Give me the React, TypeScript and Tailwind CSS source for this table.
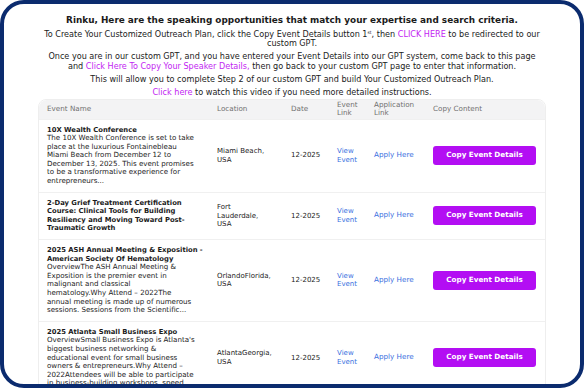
const events = [
  {
    title: ["10X Wealth Conference"],
    desc: [
      "The 10X Wealth Conference is set to take",
      "place at the luxurious Fontainebleau",
      "Miami Beach from December 12 to",
      "December 13, 2025. This event promises",
      "to be a transformative experience for",
      "entrepreneurs...",
    ],
    location: ["Miami Beach,", "USA"],
  },
  {
    title: [
      "2-Day Grief Treatment Certification",
      "Course: Clinical Tools for Building",
      "Resiliency and Moving Toward Post-",
      "Traumatic Growth",
    ],
    desc: [],
    location: ["Fort", "Lauderdale,", "USA"],
  },
  {
    title: ["2025 ASH Annual Meeting & Exposition -", "American Society Of Hematology"],
    desc: [
      "OverviewThe ASH Annual Meeting &",
      "Exposition is the premier event in",
      "malignant and classical",
      "hematology.Why Attend – 2022The",
      "annual meeting is made up of numerous",
      "sessions. Sessions from the Scientific...",
    ],
    location: ["OrlandoFlorida,", "USA"],
  },
  {
    title: ["2025 Atlanta Small Business Expo"],
    desc: [
      "OverviewSmall Business Expo is Atlanta's",
      "biggest business networking &",
      "educational event for small business",
      "owners & entrepreneurs.Why Attend –",
      "2022Attendees will be able to participate",
      "in business-building workshops, speed...",
    ],
    location: ["AtlantaGeorgia,", "USA"],
  },
]

const cols = "grid grid-cols-[170px_74px_46px_37px_59px_1fr]"

export default function App() {
  return (
    <div className="w-[586px] h-[390px] bg-white" style={{ fontFamily: "'DejaVu Sans', sans-serif" }}>
      <div className="w-[584px] h-[388px] border-4 border-[#0b2b6e] rounded-[24px] overflow-hidden bg-white">
        <div className="px-[20px] pt-[8px] text-center text-[#1b1b1b]">
          <h2 className="text-[8.9px] font-bold leading-[16px]">
            Rinku, Here are the speaking opportunities that match your expertise and search criteria.
          </h2>
          <p className="text-[8.1px] leading-[9.5px] mt-[1.5px] whitespace-nowrap">
            To Create Your Customized Outreach Plan, click the Copy Event Details button 1
            <sup className="text-[4.5px]">st</sup>, then <span className="text-[#c21ef2]">CLICK HERE</span> to be
            redirected to our
            <br />
            custom GPT.
          </p>
          <p className="text-[8.1px] leading-[10.5px] mt-[2px] whitespace-nowrap">
            Once you are in our custom GPT, and you have entered your Event Details into our GPT system, come back to
            this page
            <br />
            and <span className="text-[#c21ef2]">Click Here To Copy Your Speaker Details,</span> then go back to your
            custom GPT page to enter that information.
          </p>
          <p className="text-[8.1px] leading-[10px] mt-[2.5px]">
            This will allow you to complete Step 2 of our custom GPT and build Your Customized Outreach Plan.
          </p>
          <p className="text-[8.1px] leading-[10px] mt-[2.5px]">
            <span className="text-[#c21ef2]">Click here</span> to watch this video if you need more detailed
            instructions.
          </p>
        </div>

        <div className="mx-[34px] mt-[2px] border border-[#eeeeee] rounded-t-[8px] text-left">
          <div className={`${cols} bg-[#f3f3f4] rounded-t-[8px] h-[19px] items-center text-[7.2px] leading-[8px] text-[#707070]`}>
            <div className="pl-[8px]">Event Name</div>
            <div className="pl-[8px]">Location</div>
            <div className="pl-[8px]">Date</div>
            <div className="pl-[8px]">
              Event
              <br />
              Link
            </div>
            <div className="pl-[8px]">
              Application
              <br />
              Link
            </div>
            <div className="pl-[8px]">Copy Content</div>
          </div>
          {events.map((e) => (
            <div key={e.title[0]} className={`${cols} border-t border-[#f0f0f0] items-center text-[7px] text-[#1b1b1b]`}>
              <div className="pl-[8px] py-[6px] leading-[8.6px] whitespace-nowrap">
                {e.title.map((t) => (
                  <div key={t} className="font-bold text-[6.8px]">
                    {t}
                  </div>
                ))}
                {e.desc.map((d) => (
                  <div key={d} className="text-[7.1px]">
                    {d}
                  </div>
                ))}
              </div>
              <div className="pl-[8px] leading-[8.6px] whitespace-nowrap">
                {e.location.map((l) => (
                  <div key={l}>{l}</div>
                ))}
              </div>
              <div className="pl-[8px]">12-2025</div>
              <div className="pl-[8px] leading-[8.6px] text-[#3a6fe0]">
                View
                <br />
                Event
              </div>
              <div className="pl-[8px] text-[#3a6fe0] text-[7.2px]">Apply Here</div>
              <div className="pl-[8px] pr-[8px]">
                <button className="w-[103px] h-[19px] rounded-[3px] bg-[#b30ef3] text-white text-[7.2px] font-semibold">
                  Copy Event Details
                </button>
              </div>
            </div>
          ))}
        </div>
      </div>
    </div>
  )
}
